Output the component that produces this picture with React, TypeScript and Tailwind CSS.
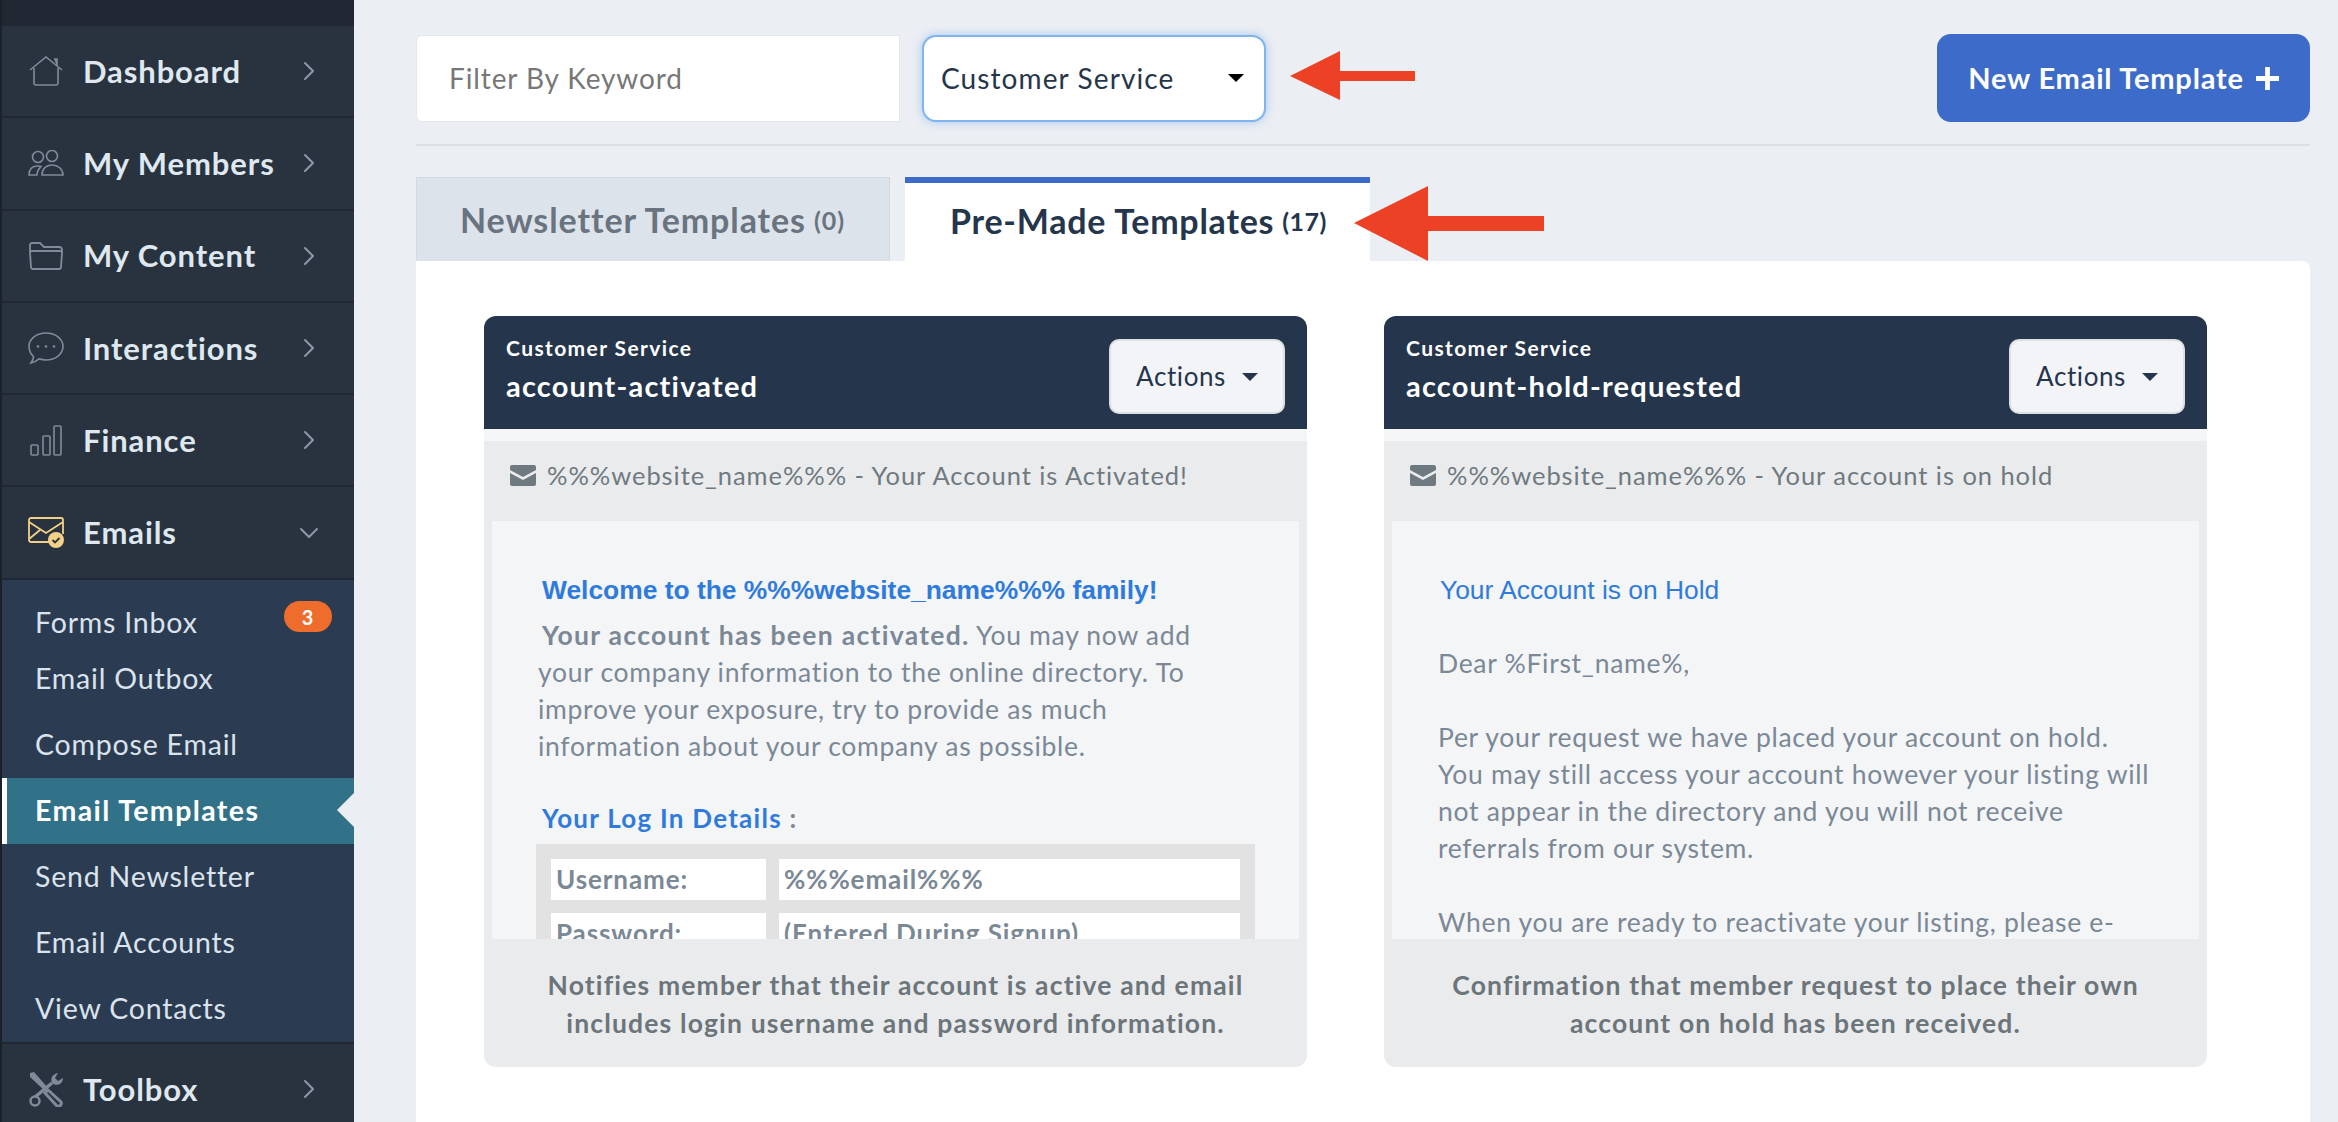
import React from 'react';
import { ChevronRight, ChevronDown } from 'lucide-react';

const IconHome = () => (
  <svg viewBox="0 0 34 30" className="w-[34px] h-[30px]" fill="none" stroke="#7f8b98" strokeWidth="1.6">
    <path d="M1 14 17 1l16 13" />
    <path d="M5 12v15a2 2 0 0 0 2 2h20a2 2 0 0 0 2-2V12" />
    <path d="M25 3h3v7" fill="#7f8b98" />
  </svg>
);

const IconMembers = () => (
  <svg viewBox="0 0 36 26" className="w-[36px] h-[26px]" fill="none" stroke="#7f8b98" strokeWidth="1.6">
    <circle cx="10" cy="7" r="5.5" />
    <circle cx="24" cy="6" r="5.5" />
    <path d="M1 25c0-6 3-9 9-9 1 0 2 0 3 .4-2 2-4 5-4 8.600z" />
    <path d="M14 25c0-6 4-10 10-10s11 4 11 10z" />
  </svg>
);

const IconFolder = () => (
  <svg viewBox="0 0 34 28" className="w-[34px] h-[28px]" fill="none" stroke="#7f8b98" strokeWidth="1.8">
    <path d="M1 10V3a2 2 0 0 1 2-2h8l4 4h15a3 3 0 0 1 3 3v3" />
    <path d="M1 11a2 2 0 0 1 2-2h28a2 2 0 0 1 2 2l-1 14a2 2 0 0 1-2 2H4a2 2 0 0 1-2-2z" />
  </svg>
);

const IconChat = () => (
  <svg viewBox="0 0 36 32" className="w-[36px] h-[32px]" fill="none" stroke="#7f8b98" strokeWidth="1.6">
    <path d="M18 1c9.500 0 17 6 17 13.500S27.500 28 18 28c-2.500 0-5-.4-7-1.200C9 28.500 6 30.500 3 31c1.500-2 2.500-4 2.500-6.500C2.800 22 1 18.500 1 14.500 1 7 8.500 1 18 1z" />
    <circle cx="10" cy="14.500" r="1.300" fill="#7f8b98" stroke="none" />
    <circle cx="18" cy="14.500" r="1.300" fill="#7f8b98" stroke="none" />
    <circle cx="26" cy="14.500" r="1.300" fill="#7f8b98" stroke="none" />
  </svg>
);

const IconBars = () => (
  <svg viewBox="0 0 32 31" className="w-[32px] h-[31px]" fill="none" stroke="#7f8b98" strokeWidth="1.6">
    <rect x="1" y="20" width="7" height="10" rx="1" />
    <rect x="13" y="11" width="7" height="19" rx="1" />
    <rect x="24" y="1" width="7" height="29" rx="1" />
  </svg>
);

const IconEmails = () => (
  <svg viewBox="0 0 36 31" className="w-[36px] h-[31px]" fill="none" stroke="#f3d087" strokeWidth="1.800">
    <path d="M21 25H3a2 2 0 0 1-2-2V3a2 2 0 0 1 2-2h30a2 2 0 0 1 2 2v14" />
    <path d="M1 5l17 11L35 5M1 22l11-9" />
    <circle cx="28" cy="23" r="8" fill="#f3d087" stroke="none" />
    <path d="M24.500 23l2.500 2.500 4.500-4.500" stroke="#27323f" strokeWidth="1.800" />
  </svg>
);

const IconTools = () => (
  <svg viewBox="0 0 36 36" className="w-[36px] h-[36px]" fill="none" stroke="#7f8b98">
    <path d="M2 2l4-1 14 16-3 3L2 6z" fill="#7f8b98" stroke="none" />
    <path d="M20 19l13 12a3 3 0 0 1-4 4L17 22z" strokeWidth="3" />
    <path d="M24 12 7 26" strokeWidth="3.500" />
    <circle cx="7" cy="30" r="4.500" strokeWidth="2.500" />
    <path d="M24 12c-2-4 0-9 6-10l-3 5 3 3 5-3c0 6-6 9-11 5z" fill="#7f8b98" stroke="none" />
  </svg>
);

const IconEnvelope = () => (
  <svg viewBox="0 0 26 21" className="w-[26px] h-[21px] shrink-0">
    <path d="M2 0h22a2 2 0 0 1 2 2v3L13 12 0 5V2a2 2 0 0 1 2-2z" fill="#6f7a80" />
    <path d="M0 8l13 7 13-7v11a2 2 0 0 1-2 2H2a2 2 0 0 1-2-2z" fill="#6f7a80" />
  </svg>
);

const Caret = ({ color = '#111827' }: { color?: string }) => (
  <svg viewBox="0 0 16 8" className="w-[16px] h-[8px]">
    <path d="M0 0h16L8 8z" fill={color} />
  </svg>
);

const navTop = [
  { label: 'Dashboard', icon: <IconHome /> },
  { label: 'My Members', icon: <IconMembers /> },
  { label: 'My Content', icon: <IconFolder /> },
  { label: 'Interactions', icon: <IconChat /> },
  { label: 'Finance', icon: <IconBars /> },
];

function NavRow({ label, icon, open }: { label: string; icon: React.ReactNode; open?: boolean }) {
  return (
    <div className="flex items-center h-[92.300px] border-b-2 border-[#1f2833] bg-[#28333f]">
      <div className="w-[81px] flex justify-center pl-[6px]">{icon}</div>
      <span className="flex-1 text-[31px] font-bold tracking-[0.9px] text-[#dfe7ef]">{label}</span>
      {open ? (
        <ChevronDown className="w-[32px] h-[32px] mr-[29px] text-[#8d99a6]" strokeWidth={1.5} />
      ) : (
        <ChevronRight className="w-[32px] h-[32px] mr-[29px] text-[#8d99a6]" strokeWidth={1.5} />
      )}
    </div>
  );
}

function Sidebar() {
  return (
    <aside className="w-[354px] shrink-0 h-full border-l-2 border-[#1b2029] bg-[#28333f] overflow-hidden">
      <div className="h-[26px] bg-[#222833]" />
      {navTop.map((n) => (
        <NavRow key={n.label} label={n.label} icon={n.icon} />
      ))}
      <NavRow label="Emails" icon={<IconEmails />} open />
      <div className="bg-[#2b3c52] pt-[20px] text-[28.500px] tracking-[0.800px] text-[#dbe3ec] border-b-2 border-[#1f2833]">
        <div className="h-[46px] flex items-center justify-between pl-[33px] pr-[22px]">
          <span>Forms Inbox</span>
          <span className="w-[48px] h-[31px] -mt-[12px] rounded-full bg-[#ee6c2c] text-white text-[20px] font-bold flex items-center justify-center">3</span>
        </div>
        <div className="h-[66px] flex items-center pl-[33px]">Email Outbox</div>
        <div className="h-[66px] flex items-center pl-[33px]">Compose Email</div>
        <div className="relative h-[66px] flex items-center pl-[28px] border-l-[5px] border-white bg-[#327289] text-white font-bold tracking-[1.4px]">
          Email Templates
          <div className="absolute right-0 top-[15px] w-0 h-0 border-y-[17px] border-y-transparent border-r-[17px] border-r-[#ebeef3]" />
        </div>
        <div className="h-[66px] flex items-center pl-[33px]">Send Newsletter</div>
        <div className="h-[66px] flex items-center pl-[33px]">Email Accounts</div>
        <div className="h-[66px] flex items-center pl-[33px]">View Contacts</div>
      </div>
      <NavRow label="Toolbox" icon={<IconTools />} />
    </aside>
  );
}

function TemplateCard({ name, subject, footer, children }: { name: string; subject: string; footer: React.ReactNode; children: React.ReactNode }) {
  return (
    <div className="w-[823px]">
      <div className="h-[113px] bg-[#25354c] rounded-t-xl flex items-center justify-between pl-[22px] pr-[22px]">
        <div className="text-white -mt-[6px]">
          <div className="text-[21px] font-bold leading-[28px] tracking-[1.400px]">Customer Service</div>
          <div className="text-[29px] font-bold leading-[38px] mt-[5px] tracking-[1.200px]">{name}</div>
        </div>
        <button className="w-[176px] h-[75px] mt-[8px] bg-[#f3f4f8] border-2 border-[#dddfe3] rounded-[10px] flex items-center justify-center gap-[16px] text-[26px] tracking-[0.6px] text-[#25354c]">
          Actions
          <Caret color="#25354c" />
        </button>
      </div>
      <div className="h-[12px] bg-[#f4f5f7]" />
      <div className="h-[80px] bg-[#eaebed] flex items-center gap-[11px] pl-[26px] pb-[12px] text-[25.500px] tracking-[0.950px] text-[#6f7a80]">
        <IconEnvelope />
        <span>{subject}</span>
      </div>
      <div className="bg-[#eaebed] px-[8px]">
        <div className="h-[418px] bg-[#f4f5f7] overflow-hidden pt-[54px] pl-[46px] text-[26.500px] leading-[37px] tracking-[0.700px] text-[#7b8896]">
          {children}
        </div>
      </div>
      <div className="h-[128px] bg-[#eaebed] rounded-b-xl pt-[27px] text-center text-[26.500px] leading-[38px] font-bold tracking-[1.150px] text-[#6c757a]">
        {footer}
      </div>
    </div>
  );
}

export default function App() {
  return (
    <div className="flex w-full h-screen overflow-hidden bg-[#ebeef3] font-['Lato',sans-serif]">
      <Sidebar />
      <main className="relative flex-1 h-full overflow-hidden pl-[62px] pr-[28px] pt-[34px]">
        {/* Filter row */}
        <div className="flex items-center h-[88px]">
          <input
            placeholder="Filter By Keyword"
            className="w-[484px] h-[87px] bg-white border border-[#e4e6ea] rounded-l-[6px] pl-[32px] text-[28px] tracking-[0.900px] text-[#777] placeholder:text-[#777] outline-none"
          />
          <div className="w-[344px] h-[87px] ml-[22px] bg-white border-2 border-[#7fb4ee] rounded-[14px] shadow-[0_0_8px_rgba(95,160,235,0.5)] flex items-center justify-between pl-[17px] pr-[20px] text-[28px] tracking-[1.100px] text-[#25354c]">
            Customer Service
            <Caret color="#000000" />
          </div>
          <button className="ml-auto w-[373px] h-[88px] bg-[#3d6bc9] rounded-[14px] flex items-center justify-center gap-[12px] text-[29px] font-bold tracking-[0.800px] text-white">
            New Email Template
            <svg viewBox="0 0 24 24" className="w-[23px] h-[23px]">
              <path d="M9.500 0h5v9.500H24v5h-9.500V24h-5v-9.500H0v-5h9.500z" fill="#ffffff" />
            </svg>
          </button>
        </div>
        <div className="h-[2px] bg-[#dcdfe4] mt-[22px]" />

        {/* Tabs */}
        <div className="flex mt-[31px] h-[84px] gap-[15px]">
          <div className="w-[474px] bg-[#dde3ea] border border-[#d3d9e0] border-b-0 flex items-center pl-[43px] text-[#6a7480]">
            <span className="text-[34px] font-bold tracking-[0.900px]">Newsletter Templates</span>
            <span className="text-[25px] font-bold ml-[8px] tracking-[1px] mt-[3px]">(0)</span>
          </div>
          <div className="w-[465px] bg-white border-t-[6px] border-[#3d6bc9] flex items-center pl-[45px] pb-[4px] text-[#25354c]">
            <span className="text-[34px] font-bold tracking-[0.750px]">Pre-Made Templates</span>
            <span className="text-[25px] font-bold ml-[8px] tracking-[0.500px] mt-[3px]">(17)</span>
          </div>
        </div>

        {/* Panel */}
        <div className="bg-white rounded-tr-lg h-[900px] pl-[68px] pt-[55px]">
          <div className="flex gap-[77px]">
            <TemplateCard
              name="account-activated"
              subject="%%%website_name%%% - Your Account is Activated!"
              footer={<>Notifies member that their account is active and email<br />includes login username and password information.</>}
            >
              <div className="pl-[4px] h-[30px] leading-[30px] font-['Liberation_Sans',sans-serif] text-[26.400px] tracking-normal font-bold text-[#2f7bdc]">
                Welcome to the %%%website_name%%% family!
              </div>
              <div className="mt-[12px]">
                <span className="pl-[4px] font-bold tracking-[1.300px]">Your account has been activated.</span> You may now add<br />
                your company information to the online directory. To<br />
                improve your exposure, try to provide as much<br />
                information about your company as possible.
              </div>
              <div className="mt-[38px] pl-[4px] h-[30px] leading-[30px] font-bold text-[26px] tracking-[1.260px] text-[#2f7bdc]">
                Your Log In Details<span className="text-[#7b8896]"> :</span>
              </div>
              <div className="mt-[11px] -ml-[2px] w-[719px] bg-[#e2e2e2] p-[15px] grid grid-cols-[215px_461px] gap-[13px] font-bold text-[26px] leading-[41px] tracking-[0.900px]">
                <div className="bg-white pl-[5px] h-[41px]">Username:</div>
                <div className="bg-white pl-[5px] h-[41px]">%%%email%%%</div>
                <div className="bg-white pl-[5px] h-[41px]">Password:</div>
                <div className="bg-white pl-[5px] h-[41px]">(Entered During Signup)</div>
              </div>
            </TemplateCard>

            <TemplateCard
              name="account-hold-requested"
              subject="%%%website_name%%% - Your account is on hold"
              footer={<>Confirmation that member request to place their own<br />account on hold has been received.</>}
            >
              <div className="pl-[2px] h-[30px] leading-[30px] font-['Liberation_Sans',sans-serif] text-[26.400px] tracking-normal text-[#2f7bdc]">
                Your Account is on Hold
              </div>
              <div className="mt-[40px]">
                Dear %First_name%,<br /><br />
                Per your request we have placed your account on hold.<br />
                You may still access your account however your listing will<br />
                not appear in the directory and you will not receive<br />
                referrals from our system.<br /><br />
                When you are ready to reactivate your listing, please e-
              </div>
            </TemplateCard>
          </div>
        </div>

        {/* Red annotation arrows */}
        <svg viewBox="0 0 125 49" className="absolute left-[936px] top-[51px] w-[125px] h-[49px]">
          <path d="M0 25 50 0v20h75v10H50v19z" fill="#ec4124" />
        </svg>
        <svg viewBox="0 0 190 75" className="absolute left-[1000px] top-[186px] w-[190px] h-[75px]">
          <path d="M0 37 74 0v30h116v15H74v30z" fill="#ec4124" />
        </svg>
      </main>
    </div>
  );
}
